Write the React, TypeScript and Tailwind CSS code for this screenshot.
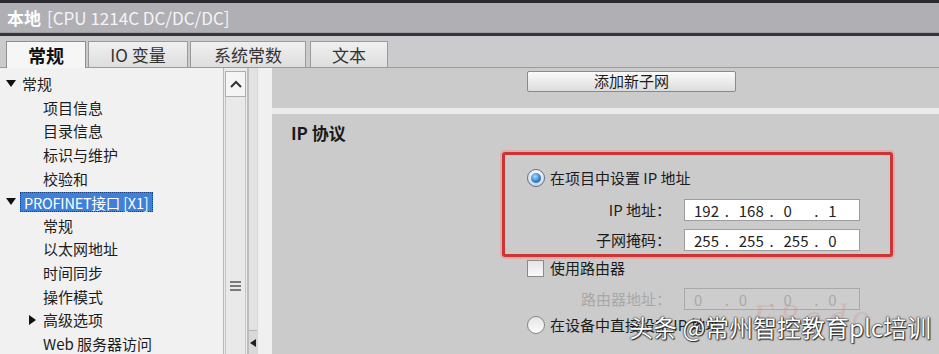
import React from "react";

type Row = { t: string; lvl: 0 | 1; arrow?: "down" | "right"; sel?: boolean };

const rows: Row[] = [
  { t: "常规", lvl: 0, arrow: "down" },
  { t: "项目信息", lvl: 1 },
  { t: "目录信息", lvl: 1 },
  { t: "标识与维护", lvl: 1 },
  { t: "校验和", lvl: 1 },
  { t: "PROFINET接口 [X1]", lvl: 0, arrow: "down", sel: true },
  { t: "常规", lvl: 1 },
  { t: "以太网地址", lvl: 1 },
  { t: "时间同步", lvl: 1 },
  { t: "操作模式", lvl: 1 },
  { t: "高级选项", lvl: 1, arrow: "right" },
  { t: "Web 服务器访问", lvl: 1 },
];

function DownArrow() {
  return (
    <svg width="10" height="7" viewBox="0 0 10 7" className="shrink-0">
      <path d="M0 0 L10 0 L5 7 Z" fill="#111" />
    </svg>
  );
}
function RightArrow() {
  return (
    <svg width="7" height="10" viewBox="0 0 7 10" className="shrink-0">
      <path d="M0 0 L7 5 L0 10 Z" fill="#111" />
    </svg>
  );
}

function TreeRow({ r }: { r: Row }) {
  if (r.lvl === 0) {
    return (
      <div className="flex items-center h-[23.6px] pl-[6px]">
        <DownArrow />
        {r.sel ? (
          <span className="ml-[4px] px-[3px] h-[20px] leading-[19px] bg-[#3f80d8] text-white border border-dotted border-[#1b3f7a] text-[14.5px] tracking-[-0.2px]">
            {r.t}
          </span>
        ) : (
          <span className="ml-[6px]">{r.t}</span>
        )}
      </div>
    );
  }
  if (r.arrow === "right") {
    return (
      <div className="flex items-center h-[23.6px] pl-[29px]">
        <RightArrow />
        <span className="ml-[7px]">{r.t}</span>
      </div>
    );
  }
  return (
    <div className="flex items-center h-[23.6px] pl-[43px]">
      <span>{r.t}</span>
    </div>
  );
}

function IpField({ parts, disabled }: { parts: string[]; disabled?: boolean }) {
  return (
    <div
      className={
        "w-[176px] h-[22px] border flex items-center pl-[9px] text-[15px] leading-none " +
        (disabled
          ? "bg-[#cdcdcd] border-[#a9a9a9] text-[#a9a9a9]"
          : "bg-white border-[#9d9d9d] text-[#222]")
      }
    >
      {parts.map((p, i) => (
        <React.Fragment key={i}>
          <span className="w-[33px]">{p}</span>
          {i < 3 && <span className="w-[15px]">.</span>}
        </React.Fragment>
      ))}
    </div>
  );
}

function RadioOn() {
  return (
    <div className="w-[18px] h-[18px] rounded-full border border-[#5e6f82] bg-[linear-gradient(180deg,#f4f8fb,#c9d6e2)] flex items-center justify-center">
      <div className="w-[10px] h-[10px] rounded-full bg-[radial-gradient(circle_at_40%_35%,#a6e0ff,#2c79c9_60%,#154f93)]" />
    </div>
  );
}
function RadioOff() {
  return (
    <div className="w-[18px] h-[18px] rounded-full border border-[#858585] bg-[linear-gradient(180deg,#e6e6e6,#fbfbfb)]" />
  );
}
function CheckBox() {
  return (
    <div className="w-[17px] h-[17px] border border-[#8a8a8a] bg-[linear-gradient(180deg,#e4e4e4,#fafafa)]" />
  );
}

export default function App() {
  return (
    <div className="w-[939px] h-[354px] overflow-hidden relative bg-[#cbcbcb] font-['Noto_Sans_CJK_SC','Noto_Sans',sans-serif] text-[#1c1c1c]">
      {/* top dark line */}
      <div className="h-[3px] bg-[#2b2a31]" />
      {/* title bar */}
      <div className="h-[30px] bg-[#b0afb4] flex items-center pl-[7px] text-white text-[17px] border-b border-[#9e9da3]">
        <span className="font-bold">本地</span>
        <span className="ml-[6px] text-[#f4f4f6]">[CPU 1214C DC/DC/DC]</span>
      </div>
      <div className="h-[3px] bg-[#36353e]" />
      {/* tab bar */}
      <div className="h-[32px] bg-[#cbcbcd] flex items-end pl-[6px] gap-[2px] border-b border-[#9b9b9b]">
        <div className="w-[80px] h-[27px] bg-[#f6f6f6] border border-b-0 border-[#8e8e8e] flex items-center justify-center text-[18px] font-bold text-[#111] mb-[-1px]">
          常规
        </div>
        <div className="w-[100px] h-[26px] bg-[linear-gradient(180deg,#f0f0f0,#dedede)] border border-b-0 border-[#9a9a9a] flex items-center justify-center text-[17px] text-[#333]">
          IO 变量
        </div>
        <div className="w-[116px] h-[26px] bg-[linear-gradient(180deg,#f0f0f0,#dedede)] border border-b-0 border-[#9a9a9a] flex items-center justify-center text-[17px] text-[#333]">
          系统常数
        </div>
        <div className="w-[78px] h-[26px] ml-[2px] bg-[linear-gradient(180deg,#f0f0f0,#dedede)] border border-b-0 border-[#9a9a9a] flex items-center justify-center text-[17px] text-[#333]">
          文本
        </div>
      </div>
      {/* body */}
      <div className="flex h-[286px]">
        {/* left tree */}
        <div className="w-[223px] bg-[#f1f1f1] pt-[4px] text-[15px] leading-none">
          {rows.map((r, i) => (
            <TreeRow key={i} r={r} />
          ))}
        </div>
        {/* scrollbar */}
        <div className="w-[24px] flex flex-col border-l border-[#b9b9b9] bg-[#eaeaea]">
          <div className="mt-[3px] h-[26px] mx-[1px] border border-[#aeaeae] bg-[#f5f5f5] flex items-center justify-center">
            <svg width="12" height="8" viewBox="0 0 12 8">
              <path d="M1 7 L6 2 L11 7" stroke="#333" strokeWidth="2" fill="none" />
            </svg>
          </div>
          <div className="flex-1 mx-[1px] border-x border-[#c6c6c6] bg-[#e9e9e9] flex flex-col items-center">
            <div className="mt-[184px] flex flex-col gap-[2px]">
              <div className="w-[11px] h-[2px] bg-[#7a7a7a]" />
              <div className="w-[11px] h-[2px] bg-[#7a7a7a]" />
              <div className="w-[11px] h-[2px] bg-[#7a7a7a]" />
            </div>
          </div>
        </div>
        <div className="w-[10px] border-l-2 border-[#bdbdbd] bg-[#e2e2e2] flex flex-col justify-end">
          <div className="h-[24px] border-t border-[#b5b5b5] bg-[#d9d9d9] flex items-center justify-center">
            <svg width="6" height="8" viewBox="0 0 6 8">
              <path d="M6 0 L0 4 L6 8 Z" fill="#222" />
            </svg>
          </div>
        </div>
        <div className="w-[15px] bg-[#f0f0f0] border-l border-[#d8d8d8]" />
        {/* right panel */}
        <div className="flex-1 bg-[#cbcbcb] flex flex-col">
          <div className="h-[40px] pt-[3px] pl-[255px]">
            <div className="w-[209px] h-[21px] border border-[#8a8a8a] rounded-[2px] bg-[linear-gradient(180deg,#fafafa,#dcdcdc)] flex items-center justify-center text-[15px] text-[#1c1c1c]">
              添加新子网
            </div>
          </div>
          <div className="h-[6px] bg-[#ebebeb]" />
          <div className="pl-[19px] pt-[9px] h-[38px] text-[17px] font-bold leading-[20px] text-[#1a1a1a]">
            IP 协议
          </div>
          <div className="ml-[230px] w-[391px]">
            {/* red box */}
            <div className="h-[105px] border-[3px] border-[#cd3535] rounded-[3px] shadow-[0_0_0_2px_rgba(240,150,150,0.55)] pt-[14px] pb-[3px]">
              <div className="flex items-center h-[18px] pl-[22px] text-[15px]">
                <RadioOn />
                <span className="ml-[5px]">在项目中设置 IP 地址</span>
              </div>
              <div className="flex items-center mt-[12px] h-[22px] text-[15px]">
                <span className="w-[166px] text-right">IP 地址：</span>
                <span className="w-[13px]" />
                <IpField parts={["192", "168", "0", "1"]} />
              </div>
              <div className="flex items-center mt-[8px] h-[22px] text-[15px]">
                <span className="w-[166px] text-right">子网掩码：</span>
                <span className="w-[13px]" />
                <IpField parts={["255", "255", "255", "0"]} />
              </div>
            </div>
            <div className="flex items-center mt-[2px] h-[18px] pl-[25px] text-[15px]">
              <CheckBox />
              <span className="ml-[6px]">使用路由器</span>
            </div>
            <div className="flex items-center mt-[11px] h-[22px] text-[15px] pl-[3px]">
              <span className="w-[166px] text-right text-[#a8a8a8]">路由器地址：</span>
              <span className="w-[13px]" />
              <IpField parts={["0", "0", "0", "0"]} disabled />
            </div>
            <div className="flex items-center mt-[6px] h-[18px] pl-[25px] text-[15px]">
              <RadioOff />
              <span className="ml-[5px]">在设备中直接设定 IP 地址</span>
            </div>
          </div>
        </div>
      </div>
      {/* faint watermark */}
      <div className="absolute left-[752px] top-[290px] text-[36px] italic text-[rgba(215,140,140,0.3)] font-['Liberation_Serif',serif] tracking-[6px]">
        F8odo
      </div>
      {/* overlay watermark */}
      <div className="absolute left-[629px] top-[310px] text-[24px] leading-[34px] text-white [text-shadow:0_0_2px_#222,0_0_1px_#000,1px_1px_1px_#333] whitespace-nowrap">
        头条 @常州智控教育plc培训
      </div>
    </div>
  );
}
